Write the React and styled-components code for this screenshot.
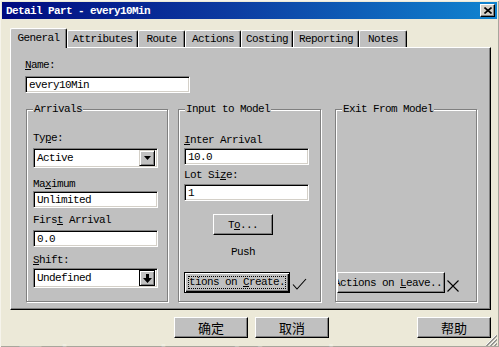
import React from 'react';
import styled, { createGlobalStyle } from 'styled-components';

const GlobalStyle = createGlobalStyle`
  html, body {
    margin: 0;
    padding: 0;
    background: #ece9d8;
  }
  body {
    font-family: "Liberation Mono", "DejaVu Sans Mono", monospace;
    font-size: 11px;
    letter-spacing: -0.6px;
    color: #000;
  }
`;

const Window = styled.div`
  position: relative;
  width: 499px;
  height: 347px;
  box-sizing: border-box;
  padding: 2px 2px 0 2px;
  background: #ece9d8;
  box-shadow: inset 1px 1px 0 #f6f4ec, inset -1px -1px 0 #a8a69c;
  overflow: hidden;
  display: flex;
  flex-direction: column;
`;

const TitleBar = styled.div`
  height: 17px;
  flex: none;
  display: flex;
  align-items: center;
  justify-content: space-between;
  padding: 0 2px 0 4px;
  background: linear-gradient(90deg, #000a80 0%, #0c3aa0 45%, #1084d0 100%);
`;

const TitleText = styled.span`
  color: #fff;
  font-weight: bold;
  line-height: 12px;
`;

const CloseButton = styled.div`
  width: 15px;
  height: 13px;
  box-sizing: border-box;
  background: #d4d0c8;
  border: 1px solid;
  border-color: #fff #000 #000 #fff;
  box-shadow: inset -1px -1px 0 #808080;
  display: flex;
  align-items: center;
  justify-content: center;
`;

const Body = styled.div`
  position: relative;
  flex: 1;
  display: flex;
  flex-direction: column;
  padding: 9px 6px 0 8px;
`;

const TabStrip = styled.div`
  display: flex;
  align-items: flex-end;
  height: 19px;
  position: relative;
  z-index: 2;
`;

const Tab = styled.div`
  width: ${p => p.$w}px;
  height: ${p => (p.$active ? 20 : 17)}px;
  margin-bottom: ${p => (p.$active ? -1 : 0)}px;
  box-sizing: border-box;
  background: #c0c0c0;
  border-top: 1px solid #fff;
  border-left: 1px solid #fff;
  border-right: 1px solid #000;
  border-radius: 2px 2px 0 0;
  box-shadow: inset -1px 0 0 #808080;
  display: flex;
  align-items: ${p => (p.$active ? 'flex-start' : 'center')};
  padding-top: ${p => (p.$active ? 3 : 0)}px;
  justify-content: center;
  line-height: 12px;
`;

const Panel = styled.div`
  position: relative;
  z-index: 1;
  height: 263px;
  box-sizing: border-box;
  background: #c0c0c0;
  border: 1px solid;
  border-color: #fff #000 #000 #fff;
  box-shadow: inset -1px -1px 0 #808080;
  padding: 11px 0 0 14px;
  display: flex;
  flex-direction: column;
`;

const Label = styled.div`
  line-height: 12px;
  height: 12px;
  margin-top: ${p => p.$mt || 0}px;
  white-space: nowrap;
`;

const TextBox = styled.div`
  width: ${p => p.$w || 125}px;
  height: 17px;
  margin-top: ${p => p.$mt || 0}px;
  box-sizing: border-box;
  background: #fff;
  border: 1px solid;
  border-color: #808080 #fff #fff #808080;
  box-shadow: inset 1px 1px 0 #000, inset -1px -1px 0 #d4d0c8;
  padding: 0 3px;
  display: flex;
  align-items: center;
  line-height: 12px;
`;

const Select = styled(TextBox)`
  height: 20px;
  padding: 0 2px 0 3px;
  justify-content: space-between;
`;

const ArrowButton = styled.div`
  width: 16px;
  height: 16px;
  box-sizing: border-box;
  background: #c0c0c0;
  border: 1px solid;
  border-color: ${p => (p.$boxed ? '#000' : '#d4d0c8 #000 #000 #d4d0c8')};
  box-shadow: inset 1px 1px 0 #fff, inset -1px -1px 0 #808080;
  display: flex;
  align-items: center;
  justify-content: center;
`;

const GroupRow = styled.div`
  display: flex;
  margin-top: 16px;
  height: 193px;
`;

const Group = styled.div`
  position: relative;
  width: ${p => p.$w}px;
  margin-left: ${p => p.$ml}px;
  box-sizing: border-box;
  border: 1px solid #808080;
  box-shadow: 1px 1px 0 #fff, inset 1px 1px 0 #fff;
  padding: ${p => p.$pt}px 0 8px ${p => p.$pl}px;
  display: flex;
  flex-direction: column;
  align-items: flex-start;
`;

const GroupTitle = styled.span`
  position: absolute;
  top: -7px;
  left: 6px;
  padding: 0 1px;
  background: #c0c0c0;
  line-height: 12px;
`;

const Button = styled.div`
  width: ${p => p.$w}px;
  height: 21px;
  margin-top: ${p => p.$mt || 0}px;
  margin-left: ${p => p.$ml || 0}px;
  box-sizing: border-box;
  background: #c0c0c0;
  border: 1px solid;
  border-color: ${p => (p.$default ? '#000' : '#fff #000 #000 #fff')};
  box-shadow: ${p => (p.$default
    ? 'inset 1px 1px 0 #fff, inset -1px -1px 0 #000, inset -2px -2px 0 #808080'
    : 'inset -1px -1px 0 #808080')};
  display: flex;
  align-items: center;
  justify-content: center;
  overflow: hidden;
  white-space: pre;
  line-height: 12px;
  flex: none;
`;

const FocusRing = styled.span`
  display: flex;
  justify-content: center;
  overflow: hidden;
  width: calc(100% - 6px);
  height: 13px;
  box-sizing: border-box;
  border: 1px dotted #000;
  line-height: 11px;
  white-space: pre;
`;

const Caption = styled.span`
  flex: none;
  white-space: pre;
`;

const CnButton = styled(Button)`
  font-family: "Noto Sans CJK SC", "Liberation Sans", sans-serif;
  font-size: 13px;
  letter-spacing: 0;
  line-height: 16px;
`;

const ActionRow = styled.div`
  margin-top: auto;
  display: flex;
  align-items: flex-end;
  gap: 2px;
`;

const PushColumn = styled.div`
  margin-left: 29px;
  width: 60px;
  display: flex;
  flex-direction: column;
  align-items: center;
`;

const Footer = styled.div`
  position: relative;
  z-index: 1;
  display: flex;
  margin-top: 7px;
`;

const Watermark = styled.div`
  position: absolute;
  left: 14px;
  bottom: -38px;
  font-family: "Liberation Sans", sans-serif;
  font-size: 42px;
  line-height: 48px;
  letter-spacing: 2px;
  color: rgba(255, 255, 255, 0.28);
  white-space: nowrap;
  z-index: 0;
  pointer-events: none;
`;

const Grip = styled.svg`
  position: absolute;
  right: 2px;
  bottom: 1px;
  z-index: 2;
`;

const U = styled.span`
  text-decoration: underline;
  text-underline-offset: 1px;
`;

const DownTriangle = () => (
  <svg width="7" height="4" viewBox="0 0 7 4">
    <path d="M0 0h7L3.5 4z" fill="#000" />
  </svg>
);

const DownArrow = () => (
  <svg width="9" height="9" viewBox="0 0 9 9">
    <path d="M3 0h3v4h3L4.5 9 0 4h3z" fill="#000" />
  </svg>
);

const tabs = [
  ['General', 57],
  ['Attributes', 71],
  ['Route', 47],
  ['Actions', 56],
  ['Costing', 52],
  ['Reporting', 66],
  ['Notes', 48],
];

export default function App() {
  return (
    <Window>
      <GlobalStyle />
      <TitleBar>
        <TitleText>Detail Part - every10Min</TitleText>
        <CloseButton>
          <svg width="8" height="7" viewBox="0 0 8 7">
            <path d="M0.5 0.5l7 6M7.5 0.5l-7 6" stroke="#000" strokeWidth="1.6" />
          </svg>
        </CloseButton>
      </TitleBar>

      <Body>
        <Watermark aria-hidden="true">Education Version</Watermark>
        <TabStrip>
          {tabs.map(([name, w], i) => (
            <Tab key={name} $w={w} $active={i === 0}>{name}</Tab>
          ))}
        </TabStrip>

        <Panel>
          <Label><U>N</U>ame:</Label>
          <TextBox $w={165} $mt={5}>every10Min</TextBox>

          <GroupRow>
            <Group $w={142} $ml={1} $pt={22} $pl={6}>
              <GroupTitle>Arrivals</GroupTitle>
              <Label>Ty<U>p</U>e:</Label>
              <Select $mt={4}>
                <span>Active</span>
                <ArrowButton><DownTriangle /></ArrowButton>
              </Select>
              <Label $mt={10}>Ma<U>x</U>imum</Label>
              <TextBox $mt={1}>Unlimited</TextBox>
              <Label $mt={6}>Firs<U>t</U> Arrival</Label>
              <TextBox $mt={4}>0.0</TextBox>
              <Label $mt={7}><U>S</U>hift:</Label>
              <Select $mt={2}>
                <span>Undefined</span>
                <ArrowButton $boxed><DownArrow /></ArrowButton>
              </Select>
            </Group>

            <Group $w={143} $ml={10} $pt={24} $pl={5}>
              <GroupTitle>Input to Model</GroupTitle>
              <Label><U>I</U>nter Arrival</Label>
              <TextBox $mt={2}>10.0</TextBox>
              <Label $mt={4}>Lot Si<U>z</U>e:</Label>
              <TextBox $mt={3}>1</TextBox>
              <PushColumn>
                <Button $w={60} $mt={13}><Caption>T<U>o</U>...</Caption></Button>
                <Label $mt={11}>Push</Label>
              </PushColumn>
              <ActionRow>
                <Button $w={106} $default>
                  <FocusRing><Caption>Actions on <U>C</U>reate...</Caption></FocusRing>
                </Button>
                <svg width="15" height="12" viewBox="0 0 15 12" style={{ marginBottom: 3 }}>
                  <path d="M1 6.5l4 4.5L14 1" fill="none" stroke="#000" strokeWidth="1.1" />
                </svg>
              </ActionRow>
            </Group>

            <Group $w={142} $ml={14} $pt={24} $pl={1}>
              <GroupTitle>Exit From Model</GroupTitle>
              <ActionRow>
                <Button $w={108}><Caption>Actions on <U>L</U>eave...</Caption></Button>
                <svg width="12" height="12" viewBox="0 0 12 12" style={{ marginBottom: 1 }}>
                  <path d="M0.5 0.5l11 11M11.5 0.5l-11 11" stroke="#000" strokeWidth="1.1" />
                </svg>
              </ActionRow>
            </Group>
          </GroupRow>
        </Panel>

        <Footer>
          <CnButton $w={74} $ml={164}>确定</CnButton>
          <CnButton $w={74} $ml={7}>取消</CnButton>
          <CnButton $w={74} $ml={88}>帮助</CnButton>
        </Footer>
      </Body>

      <Grip width="12" height="12" viewBox="0 0 12 12">
        <path d="M11 1L1 11M11 5L5 11M11 9L9 11" stroke="#fff" strokeWidth="1" />
        <path d="M12 1.5L1.5 12M12 5.5L5.5 12M12 9.5L9.5 12" stroke="#808080" strokeWidth="1.2" />
      </Grip>
    </Window>
  );
}
